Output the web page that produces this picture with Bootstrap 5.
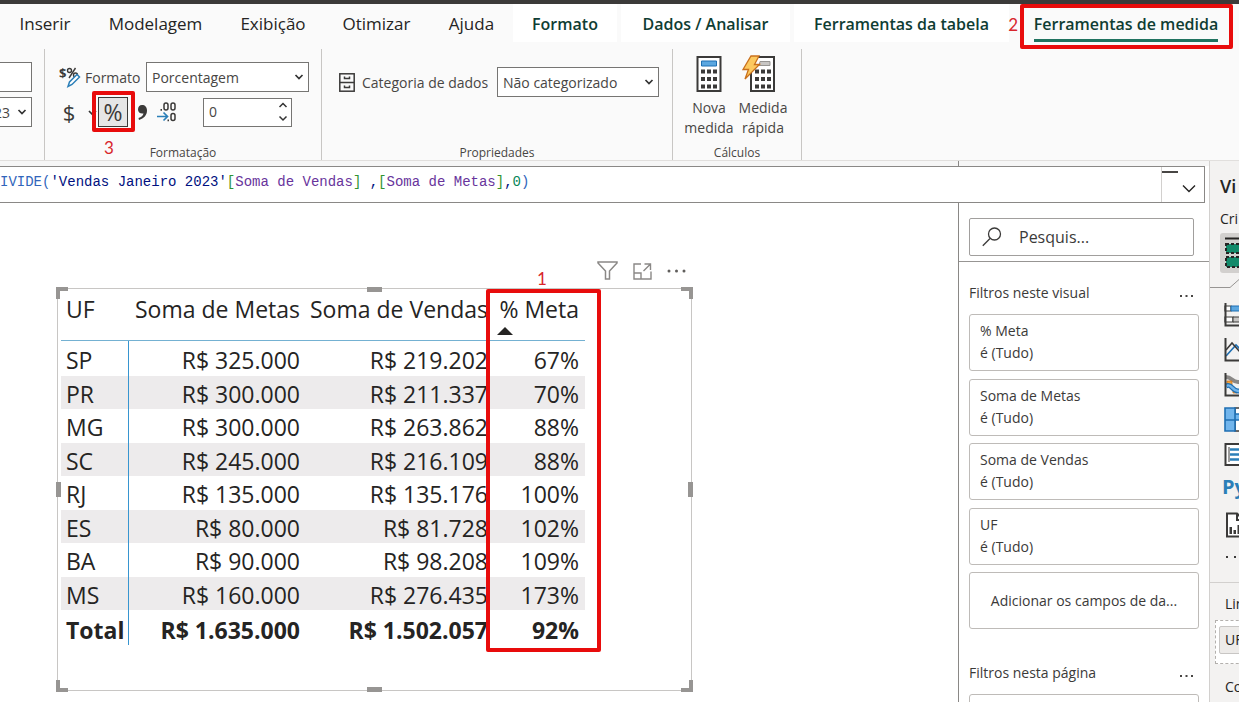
<!DOCTYPE html>
<html lang="pt-BR">
<head>
<meta charset="utf-8">
<meta name="viewport" content="width=device-width, initial-scale=1">
<title>Ferramentas de medida</title>
<link href="https://cdn.jsdelivr.net/npm/bootstrap@5.3.0/dist/css/bootstrap.min.css" rel="stylesheet">
<style>
  :root { --ink:#252423; --soft:#484644; --line:#8a8886; --mark:#e80c0c; }
  body { font-family:"Open Sans","Noto Sans",sans-serif; font-size:14px; line-height:20px; color:var(--ink); background:#fff; }
  a { color:inherit; text-decoration:none; }
  .app { height:100vh; }
  .titlebar { height:4px; background:#3b3a39; }
  .chrome { background:#fafafa; }

  /* ribbon tabs */
  .tabs { display:grid; grid-template-columns:88fr 133fr 102fr 105fr 85fr 108fr 173fr 219fr 226fr; height:38px; }
  .tabs a { font-size:17px; line-height:40px; height:38px; text-align:center; white-space:nowrap; }
  .tabs .plain { padding-left:2px; }
  .tabs .ctx { font-size:16px; font-weight:600; color:#0f3d33; background:#fff; margin-right:4px; }
  .tabs .last { margin-right:0; background:none; }
  .tabs .last span { display:inline-block; height:38px; border-bottom:3px solid #217360; }
  .frame { position:absolute; border:4px solid var(--mark); border-radius:2px; pointer-events:none; }
  .step { position:absolute; font-family:Lato,sans-serif; font-size:17px; line-height:20px; color:#d8262c; }
  .frame-tab { right:6px; top:0; width:213px; height:45px; }
  .step-tab { right:221px; top:11px; }
  .frame-pct { left:47px; top:42px; width:43px; height:41px; }
  .step-pct { left:59px; top:89px; }
  .frame-col { left:428px; top:0; width:115px; height:363px; }
  .step-col { left:479px; top:-20px; }

  /* ribbon groups */
  .ribbon { height:119px; padding-top:7px; border-bottom:1px solid #e1dfdd; }
  .group { border-right:1px solid #c8c6c4; position:relative; color:var(--soft); }
  .group .caption { font-size:12px; line-height:14px; text-align:center; margin-top:auto; }
  .g-name { width:45px; } .g-format { width:277px; } .g-props { width:351px; } .g-calc { width:129px; }
  .field { height:30px; border:1px solid #767573; border-radius:0; font-size:14px; line-height:20px; padding:5px 20px 3px 5px; color:var(--soft); background-color:#fff;
    background-size:10px 8px; background-position:right 4px center; background-repeat:no-repeat; }
  select.field { background-image:url("data:image/svg+xml,%3Csvg xmlns='http://www.w3.org/2000/svg' viewBox='0 0 10 8'%3E%3Cpath d='M1.5 2 5 5.5 8.5 2' fill='none' stroke='%23333' stroke-width='1.7'/%3E%3C/svg%3E"); }
  .f-name { width:32px; margin-top:13px; border-left:0; }
  .f-table { width:80px; margin:5px 0 0 -48px; padding-left:41px; }
  .f-format { width:163px; } .f-cat { width:162px; }
  .row-format { margin:13px 12px 0 14px; }
  .row-number { margin:5px 29px 0 14px; }
  .row-cat { margin:18px 13px 0 17px; gap:7px; }
  .row-calc { margin:6px 10px 0 9px; }
  .group label { padding-top:2px; }
  .tool { border:0; background:none; padding:0; color:#3b3a39; }
  .tool.pressed { width:30px; height:30px; border:1px solid #3b3a39; background:#e6e6e6; font-size:23px; line-height:26px; }
  .tool.dollar { font-size:22px; line-height:28px; width:20px; }
  .tool.spaced { margin-left:9px; }
  .big { width:54px; line-height:20px; font-size:14px; color:var(--soft); white-space:nowrap; }
  .big span { display:block; margin-top:5px; }
  .big svg { display:block; margin:0 auto; }
  .big .wide { margin-left:6px; }
  .spin { width:89px; height:29px; border:1px solid #767573; background:#fff; }
  .spin input { width:60px; border:0; outline:0; font-size:14px; color:var(--soft); padding:0 5px; background:none; }
  .spin button { height:13px; width:16px; line-height:0; }

  /* formula bar */
  .strip { height:5px; background:#f6f6f6; }
  .strip div { width:251px; border-left:1px solid var(--line); }
  .formula { height:37px; margin-right:4px; border:1px solid var(--line); border-left:0; background:#fff; }
  .formula code { font-family:"Liberation Mono",monospace; font-size:14px; line-height:20px; color:#001080; white-space:pre; padding-top:5px; }
  .formula .fn { color:#3165bb; } .formula .br { color:#319331; } .formula .ms { color:#68349c; } .formula .nu { color:#098658; }
  .formula .expand { width:43px; border-left:1px solid #d2d0ce; padding:7px 0 0 20px; position:relative; }
  .formula .expand::before { content:""; position:absolute; top:4px; left:0; width:16px; height:2px; background:#484644; }

  /* report visual */
  .canvas { padding:57px 20px 0 57px; }
  .visual-tools { width:635px; height:28px; padding-right:6px; gap:15px; }
  .visual { width:635px; height:403px; border:1px solid #c8c6c4; padding:3px; position:relative; }
  .visual table { width:524px; table-layout:fixed; font-size:23px; line-height:29px; margin:0; white-space:nowrap; border-collapse:separate; border-spacing:0; }
  .c-uf { width:68px; } .c-metas { width:177px; } .c-vendas { width:188px; } .c-pct { width:91px; }
  .visual th, .visual td { padding:4px 6px 0 0; text-align:right; font-weight:400; height:34px; vertical-align:top; }
  .visual tr > :first-child { text-align:left; padding-left:5px; padding-right:0; }
  .visual thead th { height:49px; line-height:35px; padding-top:0; border-bottom:1px solid #74b1d2; position:relative; }
  .visual tbody tr > :first-child, .visual tfoot tr > :first-child { border-right:1px solid #3795d0; }
  .visual tbody tr:nth-child(even) > * { background:#edebec; height:33px; }
  .visual tbody tr:first-child > * { height:35px; padding-top:5px; }
  .visual tfoot tr > * { font-weight:700; height:35px; padding-top:6px; }
  .sorted { position:absolute; left:3px; bottom:5px; border:8px solid transparent; border-top:0; border-bottom:8px solid #252423; }
  .grip { position:absolute; width:12px; height:12px; border:0 solid #979593; }
  .tl { left:-2px; top:-2px; border-width:4px 0 0 4px; } .tr { right:-2px; top:-2px; border-width:4px 4px 0 0; }
  .bl { left:-2px; bottom:-2px; border-width:0 0 4px 4px; } .brc { right:-2px; bottom:-2px; border-width:0 4px 4px 0; }
  .bar { position:absolute; background:#979593; }
  .bar.h { width:15px; height:5px; left:calc(50% - 8px); } .bar.v { width:5px; height:15px; top:calc(50% - 8px); }
  .bar.at-top { top:-2px; } .bar.at-bottom { bottom:-2px; } .bar.at-left { left:-2px; } .bar.at-right { right:-2px; }

  /* filter pane */
  .filters { width:251px; border-left:1px solid var(--line); }
  .searchzone { padding:15px 15px 5px 10px; border-bottom:1px solid #979593; }
  .searchbox { height:38px; border:1px solid #a19f9d; border-radius:2px; padding-left:12px; gap:17px; }
  .searchbox input { border:0; outline:0; width:150px; font-size:16px; padding:0; color:var(--ink); background:none; }
  .searchbox input::placeholder { color:#3b3a39; opacity:1; }
  .filters section { padding:21px 10px 0; }
  .filters section + section { padding-top:34px; }
  .filters header { margin:0 5px 11px 0; }
  .filters h2 { font-size:14px; line-height:20px; font-weight:400; margin:0; color:#3b3a39; }
  .dots { border:0; background:none; padding:6px 0 0; line-height:0; }
  .fcard { height:57px; border:1px solid #bebbb8; border-radius:3px; padding:5px 10px; line-height:22px; margin-bottom:8px; color:#3b3a39; }
  .fcard:nth-child(even) { margin-bottom:7px; }

  /* visualisation pane */
  .viz { width:30px; background:#f3f2f1; border-left:1px solid #d2d0ce; overflow:hidden; white-space:nowrap; }
  .viz h1 { font-size:18px; line-height:24px; font-weight:600; margin:13px 0 0 10px; }
  .viz h2 { font-size:14px; line-height:20px; font-weight:400; margin:0; }
  .viz .build { margin:11px 0 4px 10px; }
  .viz .pick { margin-left:10px; width:40px; height:40px; background:#d2d0ce; border-radius:3px; padding:3px 0 0 4px; line-height:0; }
  .viz .notch { display:block; margin-top:5px; }
  .viz .icons { padding-left:14px; gap:10px; line-height:0; margin-top:14px; }
  .viz .py { margin:7px 0 0 12px; font-size:20px; line-height:26px; font-weight:700; color:#2b7fb8; }
  .viz .py + .icons { margin-top:12px; gap:17px; }
  .viz .fields { margin-top:23px; border-top:1px solid #d2d0ce; padding:11px 0 0 5px; }
  .viz .fields h2 { padding-left:10px; }
  .viz .well { margin:6px 0 13px; width:60px; height:44px; border:1px dashed #b3b0ad; background:#fff; padding:5px 0 0 3px; }
  .viz .chip { width:56px; height:28px; border:1px solid #c8c6c4; background:#edebe9; border-radius:2px; padding:3px 5px; }
</style>
</head>
<body>
<div class="app d-flex flex-column overflow-hidden">
  <div class="titlebar flex-shrink-0"></div>
  <header class="chrome flex-shrink-0">
    <nav class="tabs position-relative">
      <a class="plain" href="#">Inserir</a><a class="plain" href="#">Modelagem</a><a class="plain" href="#">Exibição</a><a class="plain" href="#">Otimizar</a><a class="plain" href="#">Ajuda</a>
      <a class="ctx" href="#">Formato</a><a class="ctx" href="#">Dados / Analisar</a><a class="ctx" href="#">Ferramentas da tabela</a>
      <a class="ctx last" href="#" aria-current="page"><span>Ferramentas de medida</span></a>
      <span class="step step-tab">2</span>
      <span class="frame frame-tab"></span>
    </nav>

    <div class="ribbon d-flex">
      <div class="group g-name">
        <input class="field f-name d-block" type="text" aria-label="Nome">
        <select class="field f-table form-select" aria-label="Tabela"><option>23</option></select>
      </div>

      <div class="group g-format d-flex flex-column">
        <div class="row-format d-flex align-items-center">
          <svg width="22" height="24" viewBox="0 0 22 24"><text x="0" y="13" font-size="13" font-weight="700" fill="#3b3a39" font-family="Open Sans">$</text><g fill="none" stroke="#3b3a39" stroke-width="1.4"><circle cx="10.500" cy="5.500" r="2"/><circle cx="16.500" cy="10" r="2"/><path d="M16.500 3 10 13"/></g><path d="M9 21.500 10.500 17 18 9.500 20.500 12 13 19.500z" fill="#fff" stroke="#2b7fb8" stroke-width="1.500"/></svg>
          <label for="fmt" class="ms-1">Formato</label>
          <select id="fmt" class="field f-format form-select ms-auto"><option>Porcentagem</option></select>
        </div>
        <div class="row-number d-flex align-items-center">
          <button class="tool dollar">$</button>
          <svg class="ms-2" width="11" height="8" viewBox="0 0 11 8"><path d="M2 3 5.500 6.500 9 3" fill="none" stroke="#333" stroke-width="1.700"/></svg>
          <button class="tool pressed" aria-label="Porcentagem">%</button>
          <button class="tool spaced" aria-label="Separador de milhares"><svg width="11" height="18" viewBox="0 0 11 18"><path d="M5 1C8 1 10 3 10 6.500 10 11 7 14.500 2 16L1.500 14C4.500 13 6 11.500 6.500 9.500 3 10 1 8 1 5.500 1 3 2.500 1 5 1z" fill="#3b3a39"/></svg></button>
          <button class="tool spaced" aria-label="Casas decimais"><svg width="20" height="22" viewBox="0 0 20 22"><g fill="none" stroke="#3b3a39" stroke-width="1.500"><rect x="7" y="2" width="4" height="7" rx="2"/><rect x="14" y="2" width="4" height="7" rx="2"/><rect x="14" y="12.500" width="4" height="7" rx="2"/></g><path d="M3.500 8h1.500v1.700H3.500zM10.500 18.500H12v1.700h-1.500z" fill="#3b3a39"/><path d="M0 15.500h10M6.500 11.500l4 4-4 4" fill="none" stroke="#2b7fb8" stroke-width="1.700"/></svg></button>
          <div class="spin d-flex ms-auto">
            <input type="text" value="0" aria-label="Decimais">
            <div class="ms-auto">
              <button class="tool d-block" aria-label="Mais"><svg width="10" height="7" viewBox="0 0 10 7"><path d="M1.500 5 5 1.500 8.500 5" fill="none" stroke="#333" stroke-width="1.500"/></svg></button>
              <button class="tool d-block" aria-label="Menos"><svg width="10" height="7" viewBox="0 0 10 7"><path d="M1.500 1.500 5 5 8.500 1.500" fill="none" stroke="#333" stroke-width="1.500"/></svg></button>
            </div>
          </div>
        </div>
        <span class="frame frame-pct"></span>
        <span class="step step-pct">3</span>
        <div class="caption">Formatação</div>
      </div>

      <div class="group g-props d-flex flex-column">
        <div class="row-cat d-flex align-items-center">
          <svg width="16" height="19" viewBox="0 0 16 19" fill="none" stroke="#3b3a39" stroke-width="1.500"><rect x=".8" y=".8" width="14.400" height="17.400"/><path d="M1 9.500h14M5.500 3.500v2h5v-2M5.500 12.500v2h5v-2"/></svg>
          <label for="cat">Categoria de dados</label>
          <select id="cat" class="field f-cat form-select ms-auto"><option>Não categorizado</option></select>
        </div>
        <div class="caption">Propriedades</div>
      </div>

      <div class="group g-calc d-flex flex-column">
        <div class="row-calc d-flex">
          <button class="tool big"><svg width="26" height="38" viewBox="0 0 26 38"><rect x="1.500" y="2" width="23" height="34" fill="#fff" stroke="#3b3a39" stroke-width="2"/><path d="M5.500 6h15v5h-15z" fill="#5ba7e0" stroke="#1f6fb2"/><path d="M5 14.500h4v4H5zM11 14.500h4v4h-4zM17 14.500h4v4h-4zM5 22h4v4H5zM11 22h4v4h-4zM17 22h4v4h-4zM5 29.500h4v4H5zM11 29.500h4v4h-4zM17 29.500h4v4h-4z" fill="#3b3a39"/></svg><span>Nova<br>medida</span></button>
          <button class="tool big"><svg class="wide" width="34" height="38" viewBox="0 0 34 38"><path d="M16 2h16V36H9V16" fill="#fff" stroke="#3b3a39" stroke-width="2"/><path d="M18 6.500h10v4H17z" fill="#c8c6c4" stroke="#979593"/><path d="M13 14.500h4v4h-4zM19 14.500h4v4h-4zM25 14.500h4v4h-4zM13 22h4v4h-4zM19 22h4v4h-4zM25 22h4v4h-4zM13 29.500h4v4h-4zM19 29.500h4v4h-4zM25 29.500h4v4h-4z" fill="#3b3a39"/><path d="M9 1h8L12.500 9.500h5L3 24 6.500 14.500H1z" fill="#fcc95f" stroke="#c9701c" stroke-width="1.300"/></svg><span>Medida<br>rápida</span></button>
        </div>
        <div class="caption">Cálculos</div>
      </div>
    </div>
  </header>

  <div class="d-flex flex-grow-1 overflow-hidden">
    <div class="d-flex flex-column flex-grow-1 overflow-hidden">
      <div class="strip d-flex justify-content-end flex-shrink-0"><div></div></div>
      <div class="formula d-flex flex-shrink-0">
        <code><span class="fn">IVIDE(</span>'Vendas Janeiro 2023'<span class="br">[</span><span class="ms">Soma de Vendas</span><span class="br">]</span> ,<span class="br">[</span><span class="ms">Soma de Metas</span><span class="br">]</span>,<span class="nu">0</span><span class="fn">)</span></code>
        <button class="tool expand ms-auto" aria-label="Expandir"><svg class="d-block" width="14" height="9" viewBox="0 0 14 9"><path d="M1 1.500 7 7.500 13 1.500" fill="none" stroke="#252423" stroke-width="1.400"/></svg></button>
      </div>

      <div class="d-flex flex-grow-1 overflow-hidden">
        <main class="canvas flex-grow-1">
          <div class="visual-tools d-flex justify-content-end">
            <svg width="21" height="20" viewBox="0 0 21 20" fill="none" stroke="#8a8886" stroke-width="1.500"><path d="M1 2h19v1L12.500 11V19h-4V11L1 3z"/></svg>
            <svg width="19" height="20" viewBox="0 0 19 20" fill="none" stroke="#8a8886" stroke-width="1.400"><path d="M8 4H1V19h17V11.500M1 13h7v6M11.500 4h6v6M17.500 4l-7 7"/></svg>
            <svg width="19" height="20" viewBox="0 0 19 20" fill="#605e5c"><circle cx="2" cy="11" r="1.500"/><circle cx="9.500" cy="11" r="1.500"/><circle cx="17" cy="11" r="1.500"/></svg>
          </div>
          <div class="visual">
            <table>
              <colgroup><col class="c-uf"><col class="c-metas"><col class="c-vendas"><col class="c-pct"></colgroup>
              <thead><tr><th scope="col">UF</th><th scope="col">Soma de Metas</th><th scope="col">Soma de Vendas</th><th scope="col">% Meta<span class="sorted"></span></th></tr></thead>
              <tbody>
                <tr><td>SP</td><td>R$ 325.000</td><td>R$ 219.202</td><td>67%</td></tr>
                <tr><td>PR</td><td>R$ 300.000</td><td>R$ 211.337</td><td>70%</td></tr>
                <tr><td>MG</td><td>R$ 300.000</td><td>R$ 263.862</td><td>88%</td></tr>
                <tr><td>SC</td><td>R$ 245.000</td><td>R$ 216.109</td><td>88%</td></tr>
                <tr><td>RJ</td><td>R$ 135.000</td><td>R$ 135.176</td><td>100%</td></tr>
                <tr><td>ES</td><td>R$ 80.000</td><td>R$ 81.728</td><td>102%</td></tr>
                <tr><td>BA</td><td>R$ 90.000</td><td>R$ 98.208</td><td>109%</td></tr>
                <tr><td>MS</td><td>R$ 160.000</td><td>R$ 276.435</td><td>173%</td></tr>
              </tbody>
              <tfoot><tr><td>Total</td><td>R$ 1.635.000</td><td>R$ 1.502.057</td><td>92%</td></tr></tfoot>
            </table>
            <span class="grip tl"></span><span class="grip tr"></span><span class="grip bl"></span><span class="grip brc"></span>
            <span class="bar h at-top"></span><span class="bar h at-bottom"></span>
            <span class="bar v at-left"></span><span class="bar v at-right"></span>
            <span class="frame frame-col"></span>
            <span class="step step-col">1</span>
          </div>
        </main>

        <aside class="filters flex-shrink-0 overflow-hidden">
          <div class="searchzone">
            <div class="searchbox d-flex align-items-center">
              <svg width="20" height="20" viewBox="0 0 20 20" fill="none" stroke="#3b3a39" stroke-width="1.300"><circle cx="12.500" cy="7" r="6"/><path d="M8 11.500.8 18.800"/></svg>
              <input type="text" placeholder="Pesquis..." aria-label="Pesquisar">
            </div>
          </div>
          <section>
            <header class="d-flex justify-content-between"><h2>Filtros neste visual</h2><button class="dots" aria-label="Mais opções"><svg width="15" height="4" viewBox="0 0 15 4" fill="#484644"><path d="M1 1h2v2H1zM6.500 1h2v2h-2zM12 1h2v2h-2z"/></svg></button></header>
            <div>
              <div class="fcard">% Meta<br>é (Tudo)</div>
              <div class="fcard">Soma de Metas<br>é (Tudo)</div>
              <div class="fcard">Soma de Vendas<br>é (Tudo)</div>
              <div class="fcard">UF<br>é (Tudo)</div>
              <div class="fcard mb-0 d-flex align-items-center justify-content-center">Adicionar os campos de da...</div>
            </div>
          </section>
          <section>
            <header class="d-flex justify-content-between"><h2>Filtros nesta página</h2><button class="dots" aria-label="Mais opções"><svg width="15" height="4" viewBox="0 0 15 4" fill="#484644"><path d="M1 1h2v2H1zM6.500 1h2v2h-2zM12 1h2v2h-2z"/></svg></button></header>
            <div class="fcard"></div>
          </section>
        </aside>
      </div>
    </div>

    <aside class="viz flex-shrink-0">
      <h1>Vi</h1>
      <h2 class="build">Cri</h2>
      <div class="pick"><svg width="34" height="34" viewBox="0 0 34 34"><path d="M1 2.500h33" stroke="#252423" stroke-width="2"/><path d="M2 8h32v9H2zM2 21h32v10H2z" fill="#128a6a" stroke="#252423" stroke-width="2" stroke-dasharray="3 2"/></svg></div>
      <svg class="notch" width="30" height="10" viewBox="0 0 30 10"><path d="M0 9.500h20l9-8" fill="none" stroke="#979593"/></svg>
      <div class="icons d-flex flex-column">
        <svg width="26" height="25" viewBox="0 0 26 25"><path d="M1 4h6v5H1zM1 15h8v5H1z" fill="#fff" stroke="#3b3a39" stroke-width="1.200"/><path d="M7 4h19v5H7z" fill="#5ba7e0" stroke="#1f6fb2"/><path d="M9 15h17v5H9z" fill="#c8c6c4" stroke="#3b3a39"/><path d="M1.500 1v22.500H26" fill="none" stroke="#3b3a39" stroke-width="2"/></svg>
        <svg width="26" height="25" viewBox="0 0 26 25" fill="none"><path d="M2 19 12 8l8 8" stroke="#1f6fb2" stroke-width="1.600"/><path d="M2 13 8 6l8 9 8-7" stroke="#3b3a39" stroke-width="1.600"/><path d="M1.500 1v22.500H26" stroke="#3b3a39" stroke-width="2"/></svg>
        <svg width="26" height="25" viewBox="0 0 26 25" fill="none"><path d="M2 5c6 0 6 5 12 5s6-5 12-5" stroke="#8a8886" stroke-width="4"/><path d="M3 9h5v5H3zM9 17h4v4H9z" fill="#f2a33a" stroke="#c9701c" stroke-width=".8"/><path d="M2 14c6-3 6 5 12 5s6-5 12-5" stroke="#1f6fb2" stroke-width="5"/><path d="M2 14c6-3 6 5 12 5s6-5 12-5" stroke="#71b5ec" stroke-width="2.500"/><path d="M1.500 1v22.500H26" stroke="#3b3a39" stroke-width="2"/></svg>
        <svg width="26" height="25" viewBox="0 0 26 25" stroke-width="1.600"><path d="M11 1h15v23H11z" fill="#fff" stroke="#3b3a39"/><path d="M1 1h10v12H1zM1 13h10v11H1zM11 7h15v6H11z" fill="#71b5ec" stroke="#1f6fb2"/></svg>
        <svg width="26" height="25" viewBox="0 0 26 25" fill="none"><path d="M1.500 2H30v21H1.500z" fill="#fff" stroke="#3b3a39" stroke-width="2"/><path d="M5 5v15" stroke="#3b3a39"/><path d="M6 7.500h12M6 12.500h16M6 17.500h9" stroke="#2b7fb8" stroke-width="2.500"/></svg>
      </div>
      <div class="py">Py</div>
      <div class="icons d-flex flex-column">
        <svg width="26" height="26" viewBox="0 0 26 26"><path d="M3 1.500h10l6 6V24.500H3z" fill="#fff" stroke="#3b3a39" stroke-width="2"/><path d="M13 1.500V8h7" fill="none" stroke="#3b3a39" stroke-width="2"/><path d="M5.500 15H8v7H5.500zM9.500 18H12v4H9.500zM13.500 13H16v9h-2.500z" fill="#3b3a39"/></svg>
        <svg width="26" height="4" viewBox="0 0 26 4" fill="#3b3a39"><path d="M2 1h2v2H2zM10 1h2v2h-2zM18 1h2v2h-2z"/></svg>
      </div>
      <div class="fields">
        <h2>Lin</h2>
        <div class="well"><div class="chip">UF</div></div>
        <h2>Co</h2>
      </div>
    </aside>
  </div>
</div>
<script src="https://cdn.jsdelivr.net/npm/bootstrap@5.3.0/dist/js/bootstrap.bundle.min.js"></script>
</body>
</html>
